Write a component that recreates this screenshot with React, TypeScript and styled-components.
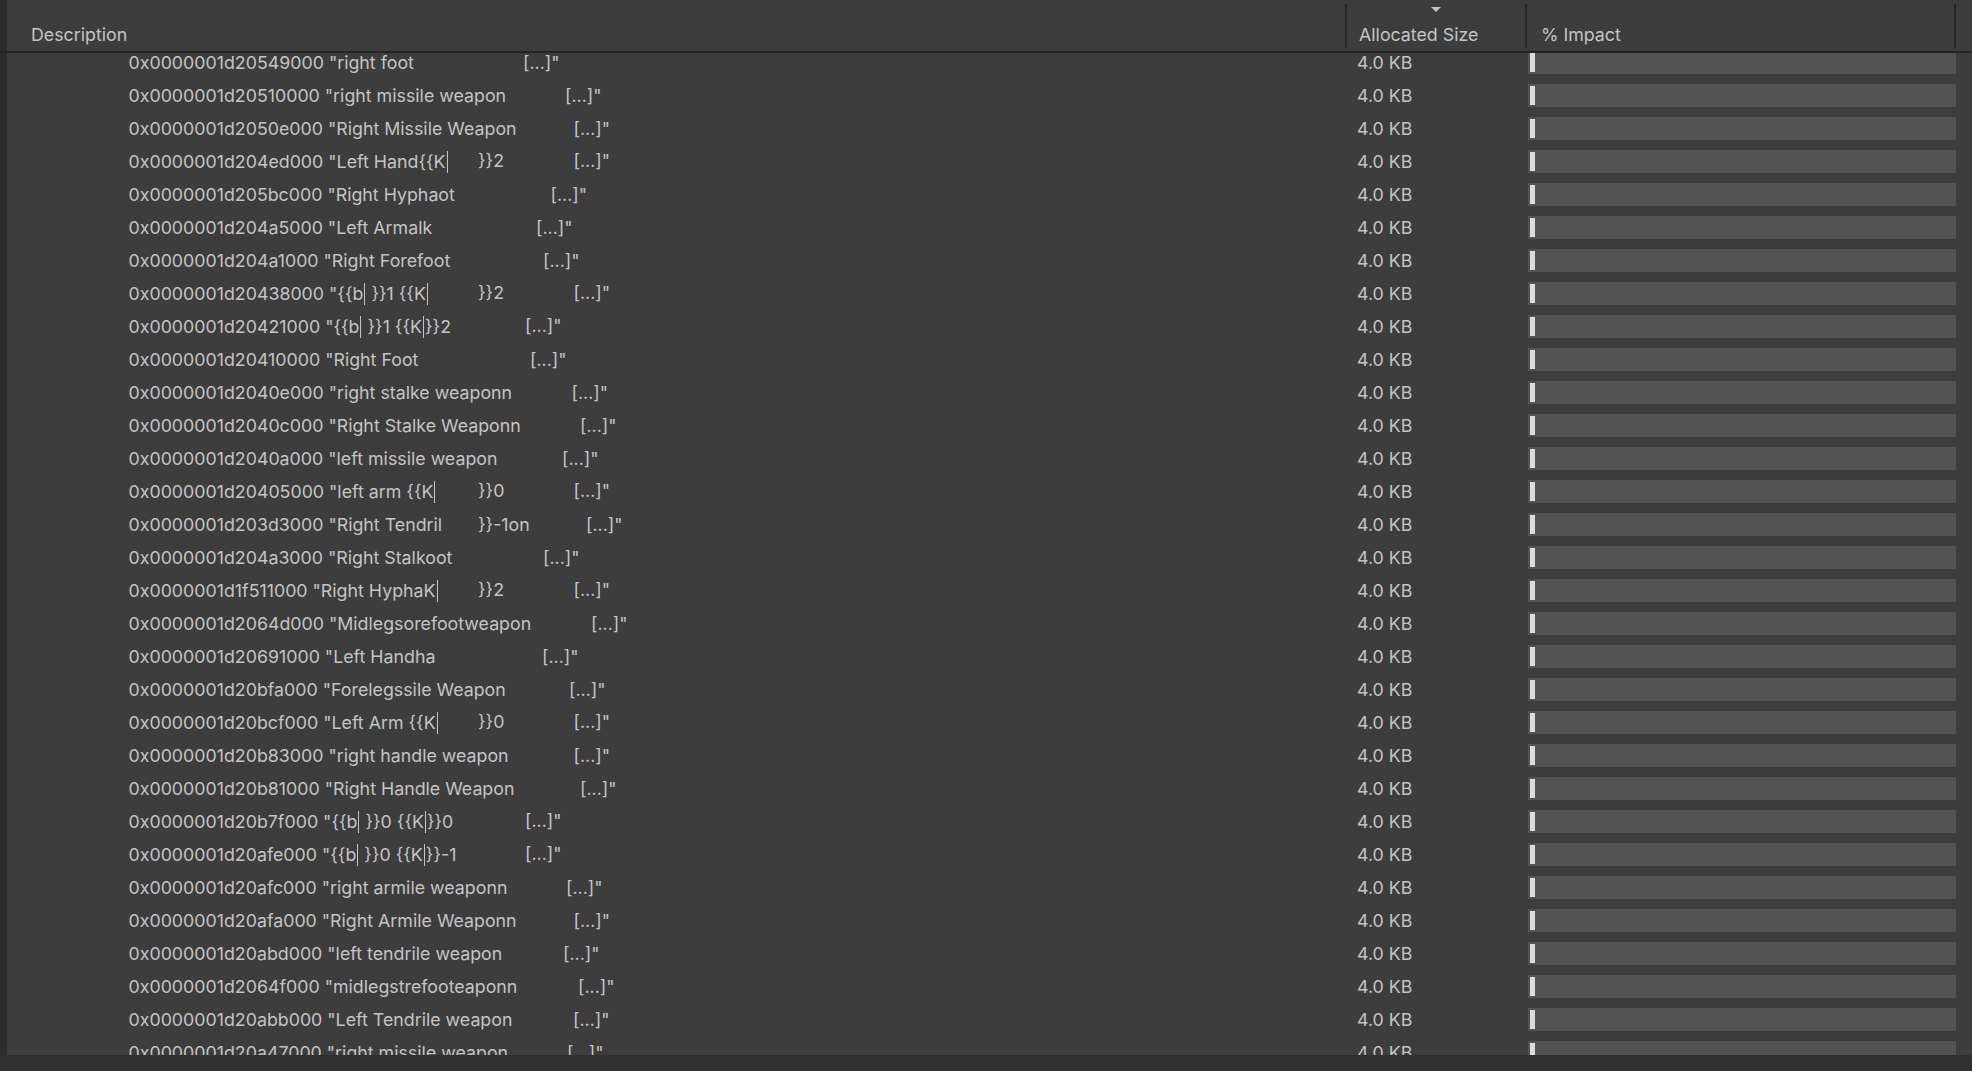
import React from 'react';
import styled, { createGlobalStyle } from 'styled-components';

const GlobalStyle = createGlobalStyle`
  html, body {
    margin: 0;
    padding: 0;
    background: #303030;
    overflow: hidden;
  }
  * {
    box-sizing: border-box;
  }
`;

const TEXT_START = 128.5;

interface Row {
  parts: string[];
  stops: number[];
}

const rows: Row[] = [
  { parts: ['0x0000001d20549000 "right foot', '[...]"'], stops: [523] },
  { parts: ['0x0000001d20510000 "right missile weapon', '[...]"'], stops: [565] },
  { parts: ['0x0000001d2050e000 "Right Missile Weapon', '[...]"'], stops: [573.5] },
  { parts: ['0x0000001d204ed000 "Left Hand{{K|', '}}2', '[...]"'], stops: [478, 573.5] },
  { parts: ['0x0000001d205bc000 "Right Hyphaot', '[...]"'], stops: [550.5] },
  { parts: ['0x0000001d204a5000 "Left Armalk', '[...]"'], stops: [536] },
  { parts: ['0x0000001d204a1000 "Right Forefoot', '[...]"'], stops: [543] },
  { parts: ['0x0000001d20438000 "{{b| }}1 {{K|', '}}2', '[...]"'], stops: [478, 573.5] },
  { parts: ['0x0000001d20421000 "{{b| }}1 {{K|}}2', '[...]"'], stops: [525] },
  { parts: ['0x0000001d20410000 "Right Foot', '[...]"'], stops: [530] },
  { parts: ['0x0000001d2040e000 "right stalke weaponn', '[...]"'], stops: [571.5] },
  { parts: ['0x0000001d2040c000 "Right Stalke Weaponn', '[...]"'], stops: [580] },
  { parts: ['0x0000001d2040a000 "left missile weapon', '[...]"'], stops: [562] },
  { parts: ['0x0000001d20405000 "left arm {{K|', '}}0', '[...]"'], stops: [478, 573.5] },
  { parts: ['0x0000001d203d3000 "Right Tendril', '}}-1on', '[...]"'], stops: [478, 586] },
  { parts: ['0x0000001d204a3000 "Right Stalkoot', '[...]"'], stops: [543] },
  { parts: ['0x0000001d1f511000 "Right HyphaK|', '}}2', '[...]"'], stops: [478, 573.5] },
  { parts: ['0x0000001d2064d000 "Midlegsorefootweapon', '[...]"'], stops: [591] },
  { parts: ['0x0000001d20691000 "Left Handha', '[...]"'], stops: [542] },
  { parts: ['0x0000001d20bfa000 "Forelegssile Weapon', '[...]"'], stops: [569] },
  { parts: ['0x0000001d20bcf000 "Left Arm {{K|', '}}0', '[...]"'], stops: [478, 573.5] },
  { parts: ['0x0000001d20b83000 "right handle weapon', '[...]"'], stops: [573.5] },
  { parts: ['0x0000001d20b81000 "Right Handle Weapon', '[...]"'], stops: [580] },
  { parts: ['0x0000001d20b7f000 "{{b| }}0 {{K|}}0', '[...]"'], stops: [525] },
  { parts: ['0x0000001d20afe000 "{{b| }}0 {{K|}}-1', '[...]"'], stops: [525] },
  { parts: ['0x0000001d20afc000 "right armile weaponn', '[...]"'], stops: [566] },
  { parts: ['0x0000001d20afa000 "Right Armile Weaponn', '[...]"'], stops: [573.5] },
  { parts: ['0x0000001d20abd000 "left tendrile weapon', '[...]"'], stops: [563] },
  { parts: ['0x0000001d2064f000 "midlegstrefooteaponn', '[...]"'], stops: [578] },
  { parts: ['0x0000001d20abb000 "Left Tendrile weapon', '[...]"'], stops: [573] },
  { parts: ['0x0000001d20a47000 "right missile weapon', '[...]"'], stops: [567] },
];

const COLUMNS = '7px 1340px 180px 429px 16px';

const Window = styled.div`
  width: 100vw;
  height: 100vh;
  display: flex;
  flex-direction: column;
  background: #3d3d3d;
  font-family: Inter, 'Noto Sans', sans-serif;
  color: #c4c4c4;
`;

const Header = styled.div`
  display: grid;
  grid-template-columns: ${COLUMNS};
  height: 53px;
  flex: none;
  border-bottom: 2px solid #242424;
  background: #3d3d3d;
`;

const Gutter = styled.div`
  background: #2c2c2c;
`;

const HeaderCell = styled.div<{ $pad: number; $divider?: boolean }>`
  margin-top: 4px;
  height: 44px;
  display: flex;
  flex-direction: column;
  padding: 0 0 3px ${p => p.$pad}px;
  border-right: ${p => (p.$divider ? '2px solid #262626' : 'none')};
  font-size: 17.8px;
  line-height: 20px;
  color: #c4c4c4;
  white-space: nowrap;
`;

const HeaderLabel = styled.span`
  margin-top: auto;
`;

const SortArrow = styled.span`
  align-self: center;
  margin: 3px 0 0 -12px;
  width: 0;
  height: 0;
  border-left: 5px solid transparent;
  border-right: 5px solid transparent;
  border-top: 5px solid #c4c4c4;
`;

const Body = styled.div`
  flex: 1;
  overflow: hidden;
  display: flex;
`;

const Rows = styled.div`
  flex: 1;
  margin-top: -7px;
  display: flex;
  flex-direction: column;
`;

const RowLine = styled.div`
  display: grid;
  grid-template-columns: ${COLUMNS};
  height: 33px;
  flex: none;
  align-items: center;
  font-size: 17.8px;
  line-height: 20px;
  white-space: pre;
`;

const GutterCell = styled.div`
  align-self: stretch;
  background: #2c2c2c;
`;

const DescCell = styled.div`
  display: flex;
  padding-left: ${TEXT_START - 7}px;
  overflow: hidden;
`;

const Segment = styled.span<{ $width?: number }>`
  flex: none;
  width: ${p => (p.$width ? `${p.$width}px` : 'auto')};
  overflow: visible;
`;

const Caret = styled.span`
  display: inline-block;
  width: 1px;
  height: 22px;
  margin: 0 1px;
  vertical-align: -5px;
  background: #c4c4c4;
`;

const SizeCell = styled.div`
  padding-left: 10px;
`;

const ImpactCell = styled.div`
  padding-left: 1px;
`;

const Bar = styled.div`
  height: 23px;
  background: #535353;
  display: flex;
  padding: 2px 0 2px 2px;
`;

const BarFill = styled.div`
  width: 5px;
  background: #dcdcdc;
`;

const Footer = styled.div`
  height: 16px;
  flex: none;
  background: #303030;
`;

function renderText(text: string) {
  const bits = text.split('|');
  return bits.map((b, i) => (
    <React.Fragment key={i}>
      {b}
      {i < bits.length - 1 && <Caret />}
    </React.Fragment>
  ));
}

const App: React.FC = () => {
  return (
    <Window>
      <GlobalStyle />
      <Header>
        <Gutter />
        <HeaderCell $pad={24} $divider>
          <HeaderLabel>Description</HeaderLabel>
        </HeaderCell>
        <HeaderCell $pad={12} $divider>
          <SortArrow />
          <HeaderLabel>Allocated Size</HeaderLabel>
        </HeaderCell>
        <HeaderCell $pad={14} $divider>
          <HeaderLabel>% Impact</HeaderLabel>
        </HeaderCell>
        <div />
      </Header>

      <Body>
        <Rows>
          {rows.map((row, i) => {
            const starts = [TEXT_START, ...row.stops];
            return (
              <RowLine key={i}>
                <GutterCell />
                <DescCell>
                  {row.parts.map((part, j) => (
                    <Segment
                      key={j}
                      $width={j < row.parts.length - 1 ? starts[j + 1] - starts[j] : undefined}
                    >
                      {renderText(part)}
                    </Segment>
                  ))}
                </DescCell>
                <SizeCell>4.0 KB</SizeCell>
                <ImpactCell>
                  <Bar>
                    <BarFill />
                  </Bar>
                </ImpactCell>
                <div />
              </RowLine>
            );
          })}
        </Rows>
      </Body>

      <Footer />
    </Window>
  );
};

export default App;
